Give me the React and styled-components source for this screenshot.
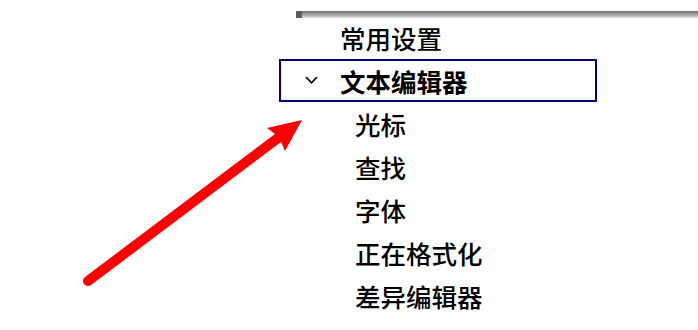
import styled, { createGlobalStyle } from 'styled-components'

const GlobalStyle = createGlobalStyle`
  html, body {
    margin: 0;
    padding: 0;
    background: #ffffff;
  }
  body {
    font-family: "Noto Sans CJK SC", "Noto Sans", sans-serif;
  }
`

const items = [
  { label: '常用设置', level: 0 },
  { label: '文本编辑器', level: 0, expanded: true, selected: true },
  { label: '光标', level: 1 },
  { label: '查找', level: 1 },
  { label: '字体', level: 1 },
  { label: '正在格式化', level: 1 },
  { label: '差异编辑器', level: 1 },
]

const Chevron = () => (
  <svg width='13' height='8' viewBox='0 0 13 8'>
    <path d='M1 1 L6.5 6.8 L12 1' fill='none' stroke='#000' strokeWidth='1.7' />
  </svg>
)

export default function App() {
  return (
    <>
      <GlobalStyle />
      <Page>
        <Panel>
          <Sash />
          <Tree>
            {items.map((item) => (
              <Row key={item.label} $level={item.level} $selected={item.selected}>
                <Twisty>{item.expanded && <Chevron />}</Twisty>
                <Label $bold={item.selected}>{item.label}</Label>
              </Row>
            ))}
          </Tree>
        </Panel>

        <Arrow width='698' height='330' viewBox='0 0 698 330'>
          <line x1='88' y1='281' x2='282' y2='135' stroke='#ff0000' strokeWidth='10' strokeLinecap='round' />
          <polygon points='302,120 267,128 279,137 285,151' fill='#ff0000' />
        </Arrow>
      </Page>
    </>
  )
}

const Page = styled.div`
  position: relative;
  width: 698px;
  height: 330px;
  overflow: hidden;
`

const Panel = styled.div`
  margin-left: 279px;
  padding-top: 11px;
  display: flex;
  flex-direction: column;
`

const Sash = styled.div`
  margin-left: 17px;
  height: 7px;
  background: linear-gradient(to bottom, #707070, #909090 35%, #b8b8b8 70%, #e4e4e4);
  border-left: 6px solid #5e5e5e;
`

const Tree = styled.div`
  display: flex;
  flex-direction: column;
  margin-top: -2px;
`

const Row = styled.div`
  box-sizing: border-box;
  width: 318px;
  height: 43px;
  display: flex;
  align-items: center;
  padding-left: ${(props) => 24 + props.$level * 15}px;
  border: 2px solid ${(props) => (props.$selected ? '#000080' : 'transparent')};
`

const Twisty = styled.div`
  width: 35px;
  flex-shrink: 0;
  display: flex;
  align-items: center;
  padding-bottom: 1px;
`

const Label = styled.span`
  font-size: 25.5px;
  line-height: 1;
  color: #000;
  font-weight: ${(props) => (props.$bold ? 700 : 500)};
  white-space: nowrap;
`

const Arrow = styled.svg`
  position: absolute;
  left: 0;
  top: 0;
  pointer-events: none;
`
